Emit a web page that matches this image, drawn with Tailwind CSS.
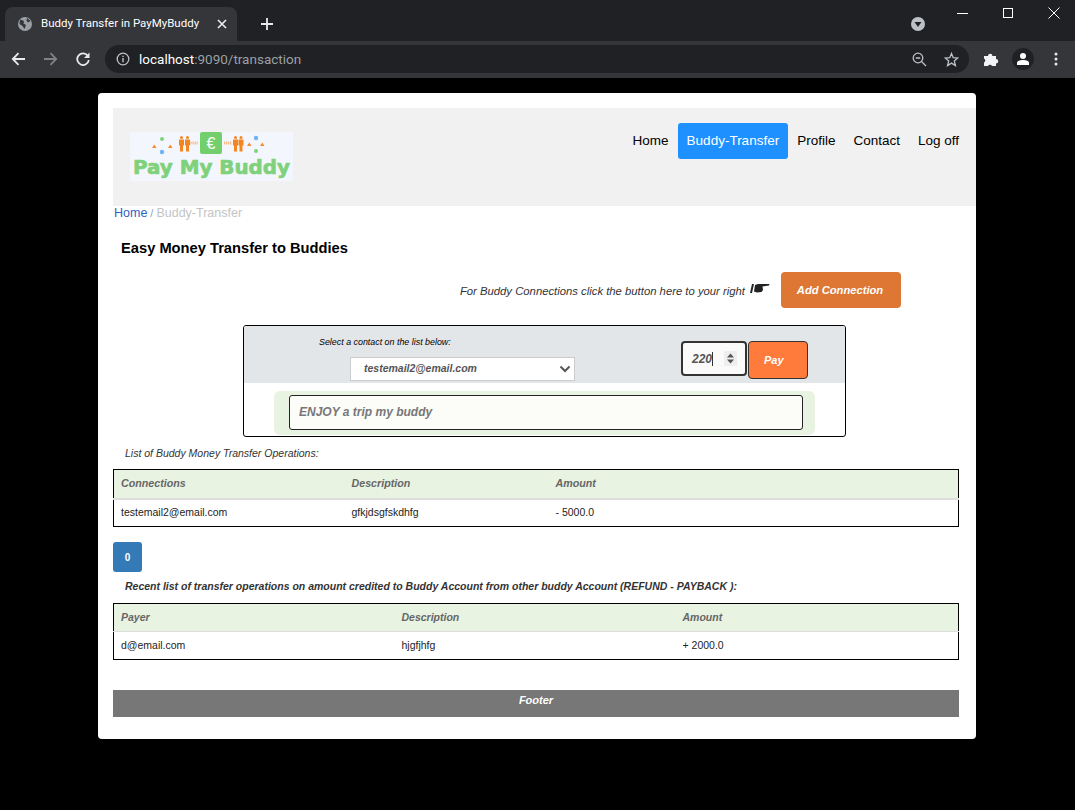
<!DOCTYPE html>
<html lang="en">
<head>
    <meta charset="UTF-8">
    <title>Buddy Transfer in PayMyBuddy</title>
    <script src="https://cdn.jsdelivr.net/npm/@tailwindcss/browser@4"></script>
</head>
<body class="bg-black h-[810px] overflow-hidden font-['Liberation_Sans',Arial,sans-serif]">
    <!-- tab strip -->
    <div class="h-[41px] bg-[#202124] flex items-end pl-[5px] font-['Roboto',sans-serif]">
        <div class="w-[232px] h-[34px] bg-[#35363a] rounded-t-[8px] flex items-center pl-[12px] text-white text-[11.5px]">
            <svg class="w-[16px] h-[16px]" viewBox="0 0 16 16"><circle cx="8" cy="8" r="7" fill="#9aa0a6"/><path d="M3 3.5 L7 5 L6.5 7.5 L9 9 L7.5 13 L5.5 10 L2.5 8 Z M10 2 L13.5 5 L11 6.5 L9.5 4.5 Z" fill="#35363a"/></svg>
            <span class="ml-[8px] w-[157px] whitespace-nowrap">Buddy Transfer in PayMyBuddy</span>
            <svg class="ml-[19px] w-[10px] h-[10px]" viewBox="0 0 10 10"><path d="M1 1 L9 9 M9 1 L1 9" stroke="#e8eaed" stroke-width="1.7"/></svg>
        </div>
        <svg class="ml-[23px] mb-[10px] w-[14px] h-[14px]" viewBox="0 0 14 14"><path d="M7 1 V13 M1 7 H13" stroke="#e8eaed" stroke-width="1.8"/></svg>
        <svg class="ml-[636px] mb-[9px] w-[16px] h-[16px]" viewBox="0 0 16 16"><circle cx="8" cy="8" r="7" fill="#bdc1c6"/><path d="M4.5 6 H11.5 L8 11 Z" fill="#202124"/></svg>
        <div class="ml-[31px] self-start flex items-start">
            <svg class="mt-[13px] w-[11px] h-[2px]" viewBox="0 0 11 2"><rect width="11" height="1" fill="#fff"/></svg>
            <svg class="mt-[8px] ml-[35px] w-[10px] h-[10px]" viewBox="0 0 10 10"><rect x="0.5" y="0.5" width="9" height="9" fill="none" stroke="#fff"/></svg>
            <svg class="mt-[7px] ml-[35px] w-[12px] h-[12px]" viewBox="0 0 12 12"><path d="M0.5 0.5 L11.5 11.5 M11.5 0.5 L0.5 11.5" stroke="#fff"/></svg>
        </div>
    </div>
    <!-- toolbar -->
    <div class="h-[37px] bg-[#35363a] flex items-center pb-[1px] font-['Roboto',sans-serif]">
        <svg class="ml-[11px] w-[15px] h-[14px]" viewBox="0 0 15 14"><path d="M14 7 H2 M7.5 1.2 L1.8 7 L7.5 12.8" fill="none" stroke="#e8eaed" stroke-width="1.8"/></svg>
        <svg class="ml-[17px] w-[15px] h-[14px]" viewBox="0 0 15 14"><path d="M1 7 H13 M7.5 1.2 L13.2 7 L7.5 12.8" fill="none" stroke="#7f8184" stroke-width="1.8"/></svg>
        <svg class="ml-[18px] w-[14px] h-[14px]" viewBox="0 0 14 14"><path d="M12 4.2 A5.8 5.8 0 1 0 12.8 8" fill="none" stroke="#e8eaed" stroke-width="1.8"/><path d="M13.5 0.5 V6 H8 Z" fill="#e8eaed"/></svg>
        <div class="ml-[15px] w-[864px] h-[28px] rounded-full bg-[#202124] flex items-center pl-[11px] pr-[10px]">
            <svg class="w-[14px] h-[14px]" viewBox="0 0 14 14"><circle cx="7" cy="7" r="5.8" fill="none" stroke="#bdc1c6" stroke-width="1.3"/><path d="M7 6 V10.2 M7 3.8 V5" stroke="#bdc1c6" stroke-width="1.4"/></svg>
            <span class="ml-[9px] text-[13.5px] text-[#9aa0a6] whitespace-nowrap"><span class="text-white">localhost</span>:9090/transaction</span>
            <svg class="ml-auto w-[15px] h-[15px]" viewBox="0 0 15 15"><circle cx="6" cy="6" r="4.8" fill="none" stroke="#bdc1c6" stroke-width="1.3"/><path d="M3.8 6 H8.2 M9.5 9.5 L14 14" stroke="#bdc1c6" stroke-width="1.3"/></svg>
            <svg class="ml-[17px] w-[15px] h-[15px]" viewBox="0 0 15 15"><path d="M7.5 1.5 L9.2 5.7 L13.8 6 L10.3 9 L11.4 13.5 L7.5 11.1 L3.6 13.5 L4.7 9 L1.2 6 L5.8 5.7 Z" fill="none" stroke="#bdc1c6" stroke-width="1.3"/></svg>
        </div>
        <svg class="ml-[14px] w-[16px] h-[16px]" viewBox="0 0 16 16"><path d="M1 5 H5 A2.2 2.2 0 0 1 9.4 5 H13 V8 A2.2 2.2 0 0 1 13 12.4 V15 H9 A2.2 2.2 0 0 0 5 15 H1 V11.5 A2.2 2.2 0 0 0 1 7.5 Z" fill="#f1f3f4"/></svg>
        <div class="ml-[13px] w-[22px] h-[22px] rounded-full bg-[#202124] flex items-center justify-center">
            <svg class="w-[14px] h-[14px]" viewBox="0 0 14 14"><circle cx="7" cy="4" r="3" fill="#fff"/><path d="M1 13 V11 C1 8.8 4.5 8 7 8 C9.5 8 13 8.8 13 11 V13 Z" fill="#fff"/></svg>
        </div>
        <svg class="ml-[20px] w-[4px] h-[14px]" viewBox="0 0 4 14"><circle cx="2" cy="2" r="1.5" fill="#e8eaed"/><circle cx="2" cy="7" r="1.5" fill="#e8eaed"/><circle cx="2" cy="12" r="1.5" fill="#e8eaed"/></svg>
    </div>

    <!-- page card -->
    <div class="mt-[15px] ml-[98px] w-[878px] h-[646px] bg-white rounded-[4px] pt-[15px] pl-[15px]">
        <header class="h-[98px] bg-[#f1f1f1] flex justify-between pr-[8px]">
            <svg class="mt-[24px] ml-[17px] w-[163px] h-[49px]" viewBox="0 0 163 49">
                <rect width="163" height="49" fill="#f3f7fd"/>
                <rect x="70" y="0" width="22" height="22" rx="2" fill="#73cf6c"/>
                <text x="81" y="17" text-anchor="middle" font-size="16" fill="#fff" font-family="Liberation Sans">€</text>
                <circle cx="32" cy="7" r="2" fill="#7fd17c"/><circle cx="32" cy="20" r="2.2" fill="#6fb2f5"/>
                <circle cx="126" cy="6" r="2.2" fill="#6fb2f5"/><circle cx="126" cy="19" r="2" fill="#7fd17c"/>
                <path d="M22 16 h4.5 l-2.2 -3.5 Z M38 16 h4.5 l-2.2 -3.5 Z M117 14 h4.5 l-2.2 -3.5 Z M130 14 h4.5 l-2.2 -3.5 Z" fill="#f58a2c"/>
                <g fill="#f5851f">
                    <circle cx="51.5" cy="5.5" r="1.5"/><path d="M49 7.5 h5 v6 h-1 v6 h-3 v-6 h-1 Z"/>
                    <circle cx="57.5" cy="5.5" r="1.5"/><path d="M55 7.5 h5 v6 h-1 v6 h-3 v-6 h-1 Z"/>
                    <circle cx="105.5" cy="5.5" r="1.5"/><path d="M103 7.5 h5 v6 h-1 v6 h-3 v-6 h-1 Z"/>
                    <circle cx="111" cy="5.5" r="1.5"/><path d="M108.5 7.5 h5 v6 h-1 v6 h-3 v-6 h-1 Z"/>
                </g>
                <path d="M60.5 11 H68 M94 11 H102" stroke="#f8b98a" stroke-width="3" stroke-dasharray="1.2 0.8"/>
                <text x="3" y="42" textLength="157" lengthAdjust="spacingAndGlyphs" font-size="20" font-weight="700" fill="#7fd17c" stroke="#7fd17c" stroke-width="0.7" font-family="DejaVu Sans">Pay My Buddy</text>
            </svg>
            <nav class="flex items-start pt-[15px] text-[13.5px] leading-[18px] text-black">
                <a class="px-[9px] py-[9px]">Home</a>
                <a class="px-[9px] py-[9px] bg-[#1e90ff] text-white rounded-[3px]">Buddy-Transfer</a>
                <a class="px-[9px] py-[9px]">Profile</a>
                <a class="px-[9px] py-[9px]">Contact</a>
                <a class="px-[9px] py-[9px]">Log off</a>
            </nav>
        </header>

        <div class="w-[846px]">
            <p class="h-[16px] pl-[1px] text-[12.5px] leading-[15px] text-[#c4c4c4]"><span class="text-[#2f62c4]">Home</span><span class="mx-[3px] text-[11px] text-[#8aa0d0]">/</span>Buddy-Transfer</p>
            <h1 class="mt-[16px] ml-[8px] text-[14.7px] leading-[20px] font-bold text-black">Easy Money Transfer to Buddies</h1>

            <div class="mt-[14px] flex justify-end items-center h-[36px] pr-[58px]">
                <span class="mt-[2px] text-[11.3px] italic text-[#333]">For Buddy Connections click the button here to your right</span>
                <svg class="ml-[5px] mb-[4px] w-[20px] h-[11px]" viewBox="0 0 20 11"><path d="M0 10 L2 1 L4 1 L2 10 Z" fill="#222"/><path d="M5 2 L8 1 H19.5 L19 2.6 L12.5 3.4 L13 7 L11.5 9 L7 9.5 L4 8.5 Z" fill="#222"/></svg>
                <button class="ml-[11px] w-[120px] h-[36px] pr-[2px] bg-[#dd7733] rounded-[4px] text-white text-[11.2px] font-bold italic">Add Connection</button>
            </div>

            <!-- transfer form -->
            <div class="mt-[17px] ml-[130px] w-[603px] h-[112px] border border-black rounded-[3px] overflow-hidden">
                <div class="h-[57px] bg-[#e2e6e8] flex">
                    <div class="ml-[75px] w-[338px]">
                        <p class="mt-[11px] h-[11px] text-[8.9px] leading-[11px] italic text-black">Select a contact on the list below:</p>
                        <div class="mt-[9px] ml-[31px] w-[225px] h-[24px] bg-white border border-[#ccc] flex items-center pl-[13px] pr-[3px] justify-between">
                            <span class="text-[10.5px] font-bold italic text-[#555]">testemail2@email.com</span>
                            <svg class="w-[12px] h-[8px]" viewBox="0 0 12 8"><path d="M1.5 1.5 L6 6 L10.5 1.5" fill="none" stroke="#555" stroke-width="2"/></svg>
                        </div>
                    </div>
                    <div class="ml-[24px] mt-[15px] w-[66px] h-[35px] border-2 border-[#333] rounded-[4px] bg-[#fafafa] flex items-center pl-[9px]">
                        <span class="text-[12px] font-bold italic text-[#555]">220</span><span class="w-[1px] h-[14px] bg-[#333]"></span>
                        <div class="ml-[11px] w-[13px] h-[15px] bg-[#eee] flex items-center justify-center">
                            <svg class="w-[9px] h-[11px]" viewBox="0 0 9 11"><path d="M4.5 0.5 L8 4.5 H1 Z M1 6.5 H8 L4.5 10.5 Z" fill="#555"/></svg>
                        </div>
                    </div>
                    <button class="ml-[1px] mt-[15px] w-[60px] h-[38px] bg-[#fe7b3c] border border-[#333] rounded-[4px] text-white text-[11px] font-bold italic text-left pl-[15px]">Pay</button>
                </div>
                <div class="ml-[30px] mt-[8px] w-[541px] h-[44px] bg-[#e8f3e2] rounded-[6px] pl-[15px] pr-[12px] pt-[4px]">
                    <div class="h-[35px] pb-[2px] bg-[#fcfcf9] border border-[#222] rounded-[3px] flex items-center pl-[9px] text-[12px] font-bold italic text-[#777]">ENJOY a trip my buddy</div>
                </div>
            </div>

            <p class="mt-[10px] ml-[12px] h-[12px] text-[10.5px] leading-[12px] italic text-[#333]">List of Buddy Money Transfer Operations:</p>

            <table class="mt-[10px] w-[846px] table-fixed border border-black text-[10.5px] text-[#222]">
                <thead>
                    <tr class="h-[29px] bg-[#e8f3e2] border-b-2 border-[#ddd] text-[#666] text-left italic font-bold text-[10.7px]">
                        <th class="pl-[7px] pb-[2px] w-[231px]">Connections</th>
                        <th class="pl-[7px] pb-[2px] w-[204px]">Description</th>
                        <th class="pl-[7px] pb-[2px]">Amount</th>
                    </tr>
                </thead>
                <tbody>
                    <tr class="h-[28px]">
                        <td class="pl-[7px]">testemail2@email.com</td>
                        <td class="pl-[7px]">gfkjdsgfskdhfg</td>
                        <td class="pl-[7px]">- 5000.0</td>
                    </tr>
                </tbody>
            </table>

            <button class="mt-[15px] block w-[29px] h-[30px] bg-[#337ab7] rounded-[3px] text-white text-[10px] font-bold">0</button>

            <p class="mt-[8px] ml-[12px] h-[12px] text-[10.5px] leading-[12px] italic font-bold text-[#333]">Recent list of transfer operations on amount credited to Buddy Account from other buddy Account (REFUND - PAYBACK ):</p>

            <table class="mt-[11px] w-[846px] table-fixed border border-black text-[10.5px] text-[#222]">
                <thead>
                    <tr class="h-[28px] bg-[#e8f3e2] border-b border-[#ddd] text-[#666] text-left italic font-bold">
                        <th class="pl-[7px] w-[281px]">Payer</th>
                        <th class="pl-[7px] w-[281px]">Description</th>
                        <th class="pl-[7px]">Amount</th>
                    </tr>
                </thead>
                <tbody>
                    <tr class="h-[28px]">
                        <td class="pl-[7px]">d@email.com</td>
                        <td class="pl-[7px]">hjgfjhfg</td>
                        <td class="pl-[7px]">+ 2000.0</td>
                    </tr>
                </tbody>
            </table>

            <footer class="mt-[30px] h-[27px] bg-[#777] text-center text-white text-[11px] italic font-bold leading-[20px]">Footer</footer>
        </div>
    </div>
</body>
</html>
